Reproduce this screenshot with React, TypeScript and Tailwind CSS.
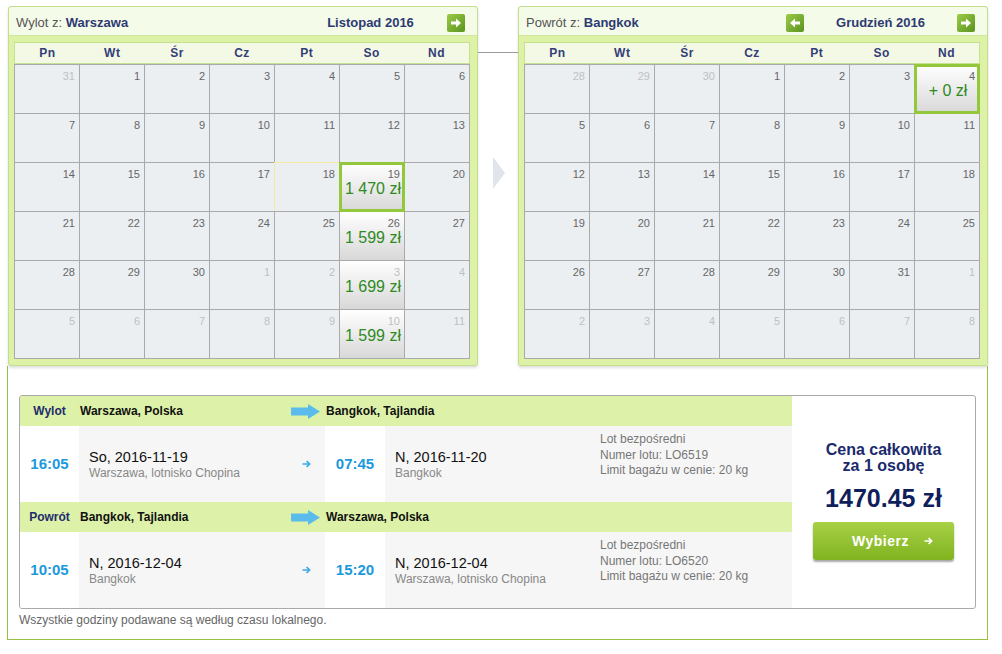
import React from 'react';

type Day = {
  n: number;
  out?: boolean;
  price?: string;
  selected?: boolean;
  hover?: boolean;
};

const WEEK = ['Pn', 'Wt', 'Śr', 'Cz', 'Pt', 'So', 'Nd'];

// 6 weeks of days, padded with the neighbouring months
function monthGrid(offset: number, len: number, prevLen: number): Day[] {
  const days: Day[] = [];
  for (let i = offset - 1; i >= 0; i--) days.push({ n: prevLen - i, out: true });
  for (let d = 1; d <= len; d++) days.push({ n: d });
  let next = 1;
  while (days.length < 42) days.push({ n: next++, out: true });
  return days;
}

const november = monthGrid(1, 30, 31);
november[18] = { ...november[18], hover: true };
november[19] = { ...november[19], price: '1 470 zł', selected: true };
november[26] = { ...november[26], price: '1 599 zł' };
november[33] = { ...november[33], price: '1 699 zł' };
november[40] = { ...november[40], price: '1 599 zł' };

const december = monthGrid(3, 31, 30);
december[6] = { ...december[6], price: '+ 0 zł', selected: true };

const NavButton = ({ dir, hidden }: { dir: 'left' | 'right'; hidden?: boolean }) => (
  <span
    className={`w-[18px] h-[18px] shrink-0 rounded-[2px] bg-linear-to-br from-[#9ccc48] to-[#5a931f] flex items-center justify-center ${
      hidden ? 'invisible' : ''
    }`}
  >
    <svg width="12" height="10" viewBox="0 0 12 10" className={dir === 'left' ? 'rotate-180' : ''}>
      <path d="M1 3.4H6V0.6L11 5L6 9.4V6.6H1Z" fill="#fff" />
    </svg>
  </span>
);

const Cell = ({ day }: { day: Day }) => (
  <div
    className={`relative h-[49px] border-r border-b border-[#aaaaaa] flex flex-col ${
      day.price ? 'bg-linear-to-b from-white to-[#d8d8d8]' : 'bg-[#eceff2]'
    }`}
  >
    {day.hover && (
      <span className="absolute -left-px -top-px right-0 bottom-0 border-t border-l border-[#f6e9a0]" />
    )}
    {day.selected && (
      <span className="absolute -left-px -top-px -right-px -bottom-px border-[3px] border-[#93c83c]" />
    )}
    <div
      className={`pt-[5px] pr-[4px] text-right text-[11px] leading-[12px] ${
        day.out ? 'text-[#c0c0c0]' : 'text-[#666666]'
      }`}
    >
      {day.n}
    </div>
    {day.price && (
      <div className="text-center pl-[2px] text-[16px] leading-[18px] text-[#2f8a1f]">{day.price}</div>
    )}
  </div>
);

const Calendar = ({
  label,
  city,
  month,
  days,
  showPrev,
}: {
  label: string;
  city: string;
  month: string;
  days: Day[];
  showPrev?: boolean;
}) => (
  <div className="w-[470px] h-[360px] shrink-0 rounded-[3px] border border-[#c3df8d] bg-[#ddf1a7] shadow-[0_2px_3px_rgba(0,0,0,0.13)] flex flex-col">
    <div className="h-[29px] shrink-0 flex items-center pt-[3px] pl-[7px] pr-[12px] bg-[#f5fbe9] border-b border-[#d0e8a2] rounded-t-[3px]">
      <div className="flex-1 text-[13px] whitespace-nowrap">
        <span className="text-[#555555]">{label} </span>
        <span className="font-bold text-[#2d3a72]">{city}</span>
      </div>
      <NavButton dir="left" hidden={!showPrev} />
      <div className="w-[153px] text-center text-[13px] font-bold text-[#2d3a72]">{month}</div>
      <NavButton dir="right" />
    </div>
    <div className="pt-[6px] pl-[5px]">
      <div className="w-[456px] h-[22px] grid grid-cols-7 border border-[#c6e18f] bg-[#f3f9e5]">
        {WEEK.map(w => (
          <div key={w} className="flex items-center justify-center text-[12px] font-bold text-[#343d78] tracking-[0.5px]">
            {w}
          </div>
        ))}
      </div>
      <div className="w-[456px] grid grid-cols-[repeat(7,65px)] border-l border-t border-[#aaaaaa]">
        {days.map((d, i) => (
          <Cell key={i} day={d} />
        ))}
      </div>
    </div>
  </div>
);

const RouteArrow = () => (
  <svg width="29" height="15" viewBox="0 0 29 15">
    <path d="M0 3.5H17V0L29 7.5L17 15V11.5H0Z" fill="#5bbbea" />
  </svg>
);

const SmallArrow = ({ color }: { color: string }) => (
  <svg width="9" height="8" viewBox="0 0 9 8">
    <path d="M0.5 4H7.5M4.6 1L7.6 4L4.6 7" stroke={color} strokeWidth="1.7" fill="none" />
  </svg>
);

type Leg = {
  label: string;
  from: string;
  to: string;
  depTime: string;
  depDate: string;
  depPlace: string;
  arrTime: string;
  arrDate: string;
  arrPlace: string;
  flight: string;
};

const legs: Leg[] = [
  {
    label: 'Wylot',
    from: 'Warszawa, Polska',
    to: 'Bangkok, Tajlandia',
    depTime: '16:05',
    depDate: 'So, 2016-11-19',
    depPlace: 'Warszawa, lotnisko Chopina',
    arrTime: '07:45',
    arrDate: 'N, 2016-11-20',
    arrPlace: 'Bangkok',
    flight: 'LO6519',
  },
  {
    label: 'Powrót',
    from: 'Bangkok, Tajlandia',
    to: 'Warszawa, Polska',
    depTime: '10:05',
    depDate: 'N, 2016-12-04',
    depPlace: 'Bangkok',
    arrTime: '15:20',
    arrDate: 'N, 2016-12-04',
    arrPlace: 'Warszawa, lotnisko Chopina',
    flight: 'LO6520',
  },
];

const LegRows = ({ leg }: { leg: Leg }) => (
  <>
    <div className="h-[30px] bg-[#ddf2a8] flex items-center text-[12px] font-bold">
      <div className="w-[59px] text-center text-[#1f2c6b]">{leg.label}</div>
      <div className="w-[246px] flex items-center justify-between pl-[1px] pr-[5px] text-[#111111]">
        <span>{leg.from}</span>
        <RouteArrow />
      </div>
      <div className="flex-1 pl-[1px] text-[#111111]">{leg.to}</div>
    </div>
    <div className="h-[76px] flex">
      <div className="w-[59px] bg-white flex items-center justify-center text-[15px] font-bold text-[#1b99dd]">
        {leg.depTime}
      </div>
      <div className="w-[246px] bg-[#f6f6f6] flex items-center pl-[10px] pr-[14px]">
        <div className="flex-1 pt-[2px]">
          <div className="text-[14.5px] leading-[17px] text-[#111111]">{leg.depDate}</div>
          <div className="text-[12px] leading-[15px] text-[#888888]">{leg.depPlace}</div>
        </div>
        <SmallArrow color="#3dabe4" />
      </div>
      <div className="w-[60px] bg-white flex items-center justify-center text-[15px] font-bold text-[#1b99dd]">
        {leg.arrTime}
      </div>
      <div className="flex-1 bg-[#f6f6f6] flex">
        <div className="w-[215px] pl-[10px] pt-[2px] flex flex-col justify-center">
          <div className="text-[14.5px] leading-[17px] text-[#111111]">{leg.arrDate}</div>
          <div className="text-[12px] leading-[15px] text-[#888888]">{leg.arrPlace}</div>
        </div>
        <div className="pt-[6px] text-[12px] leading-[15.5px] text-[#777777]">
          <div>Lot bezpośredni</div>
          <div>Numer lotu: {leg.flight}</div>
          <div>Limit bagażu w cenie: 20 kg</div>
        </div>
      </div>
    </div>
  </>
);

export default function App() {
  return (
    <div className="w-[1002px] h-[654px] overflow-hidden bg-white font-['Liberation_Sans',Arial,sans-serif]">
      <div className="flex pt-[6px] pl-[8px]">
        <Calendar label="Wylot z:" city="Warszawa" month="Listopad 2016" days={november} />
        <div className="w-[40px] shrink-0 flex flex-col">
          <div className="mt-[46px] h-px bg-[#9a9a9a]" />
          <div className="mt-[104px] ml-[15px] w-0 h-0 border-y-[16px] border-y-transparent border-l-[12px] border-l-[#dfe5ea]" />
        </div>
        <Calendar label="Powrót z:" city="Bangkok" month="Grudzień 2016" days={december} showPrev />
      </div>

      <div className="ml-[7px] w-[981px] h-[274px] border-x border-b border-[#98c044] pt-[29px] pl-[11px]">
        <div className="w-[957px] border border-[#aaaaaa] rounded-[3px] flex bg-white overflow-hidden">
          <div className="w-[772px] flex flex-col">
            {legs.map(l => (
              <LegRows key={l.label} leg={l} />
            ))}
          </div>
          <div className="flex-1 flex flex-col items-center pt-[46px] text-[#1a2a6c]">
            <div className="text-[16px] leading-[16px] font-bold text-center">
              Cena całkowita
              <br />
              za 1 osobę
            </div>
            <div className="mt-[9px] text-[25px] leading-[30px] font-bold text-[#0f1f5c]">1470.45 zł</div>
            <button className="mt-[9px] w-[141px] h-[38px] rounded-[3px] bg-linear-to-b from-[#a8d145] to-[#80b31e] shadow-[0_2px_2px_rgba(0,0,0,0.35)] flex items-center pl-[39px] gap-[15px] text-white text-[14px] font-bold tracking-[0.5px]">
              Wybierz
              <SmallArrow color="#ffffff" />
            </button>
          </div>
        </div>
        <div className="mt-[4px] text-[12px] leading-[14px] text-[#666666]">
          Wszystkie godziny podawane są według czasu lokalnego.
        </div>
      </div>
    </div>
  );
}
